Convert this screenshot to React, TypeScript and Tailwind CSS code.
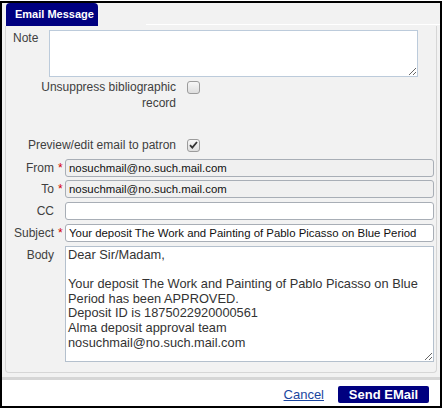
import React from "react";

const font = { fontFamily: '"Liberation Sans", Arial, sans-serif' };

const Checkbox = ({ checked = false }: { checked?: boolean }) => (
  <div className="w-[13px] h-[13px] rounded-[3px] border border-[#9c9c9c] bg-gradient-to-b from-[#f7f7f7] to-[#dedede] flex items-center justify-center shrink-0">
    {checked && (
      <svg width="9" height="8" viewBox="0 0 9 8">
        <path d="M1 4.2 L3.3 6.6 L8 1" fill="none" stroke="#333" strokeWidth="1.8" />
      </svg>
    )}
  </div>
);

const FieldRow = ({
  label,
  required,
  children,
  className = "",
}: {
  label: string;
  required?: boolean;
  children: React.ReactNode;
  className?: string;
}) => (
  <div className={`flex items-center ${className}`}>
    <div className="w-[48px] text-right text-[12px] leading-[14px] text-[#404040]">{label}</div>
    <div className="w-[11px] pl-[4px] text-[12px] leading-[14px] text-[#d40000]">{required ? "*" : ""}</div>
    <div className="w-[369px]">{children}</div>
  </div>
);

const inputCls =
  "block w-full h-[18px] rounded-[3px] border border-[#a8aeb6] pl-[3px] text-[11.4px] text-[#111] outline-none";

export default function App() {
  return (
    <div className="w-[442px] h-[408px] bg-white pt-px" style={font}>
      <div className="h-[407px] border-2 border-black flex flex-col">
        <div className="bg-[#f2f2f2] flex flex-col">
          {/* tab strip */}
          <div className="flex h-[23px]">
            <div className="ml-[4px] w-[92px] h-full rounded-t-[4px] bg-[#000080] flex items-center pl-[9px] text-[11px] font-bold text-white">
              Email Message
            </div>
            <div className="ml-[48px] flex-1 h-px bg-white self-end mb-px" />
          </div>

          {/* panel */}
          <div className="mx-[3px] w-[432px] border-x border-b border-[#d6d6d6] rounded-b-[4px] bg-[#f2f2f2] pt-[4px] pb-[10px]">
            <div className="flex items-start">
              <div className="w-[43px] pl-[7px] mt-px text-[12px] leading-[14px] text-[#404040]">Note</div>
              <textarea className="block w-[369px] h-[47px] border border-[#bccbdb] bg-white outline-none" />
            </div>

            <div className="flex items-start mt-[2px]">
              <div className="w-[170px] text-right text-[12px] leading-[16px] text-[#404040]">
                Unsuppress bibliographic
                <br />
                record
              </div>
              <div className="ml-[11px] mt-[2px]">
                <Checkbox />
              </div>
            </div>

            <div className="flex items-center mt-[26px]">
              <div className="w-[170px] text-right text-[12px] leading-[16px] text-[#404040]">
                Preview/edit email to patron
              </div>
              <div className="ml-[11px]">
                <Checkbox checked />
              </div>
            </div>

            <FieldRow label="From" required className="mt-[6px]">
              <input readOnly defaultValue="nosuchmail@no.such.mail.com" className={`${inputCls} bg-[#f0f0f0]`} />
            </FieldRow>
            <FieldRow label="To" required className="mt-[3px]">
              <input readOnly defaultValue="nosuchmail@no.such.mail.com" className={`${inputCls} bg-[#f0f0f0]`} />
            </FieldRow>
            <FieldRow label="CC" className="mt-[4px]">
              <input defaultValue="" className={`${inputCls} bg-white`} />
            </FieldRow>
            <FieldRow label="Subject" required className="mt-[4px]">
              <input
                defaultValue="Your deposit The Work and Painting of Pablo Picasso on Blue Period"
                className={`${inputCls} bg-white`}
              />
            </FieldRow>

            <div className="flex items-start mt-[4px]">
              <div className="w-[48px] mt-[2px] text-right text-[12px] leading-[14px] text-[#404040]">Body</div>
              <div className="w-[11px]" />
              <textarea
                className="block w-[369px] h-[116px] border border-[#b4c0cd] bg-white pl-[2px] pt-[1px] text-[12.8px] leading-[14.6px] text-[#333] outline-none"
                defaultValue={
                  "Dear Sir/Madam,\n\nYour deposit The Work and Painting of Pablo Picasso on Blue\nPeriod has been APPROVED.\nDeposit ID is 1875022920000561\nAlma deposit approval team\nnosuchmail@no.such.mail.com"
                }
              />
            </div>
          </div>
          <div className="h-[4px]" />
        </div>

        <div className="h-[3px] bg-[#d6d6d6]" />

        {/* footer */}
        <div className="flex-1 bg-white flex items-start justify-end pt-[6px] pr-[11px]">
          <a href="#" className="text-[13px] leading-[17px] text-[#1a46a0] underline mr-[14px]">
            Cancel
          </a>
          <button className="w-[91px] h-[17px] rounded-[2px] bg-[#000080] text-white text-[13px] font-bold leading-[17px]">
            Send EMail
          </button>
        </div>
      </div>
    </div>
  );
}
